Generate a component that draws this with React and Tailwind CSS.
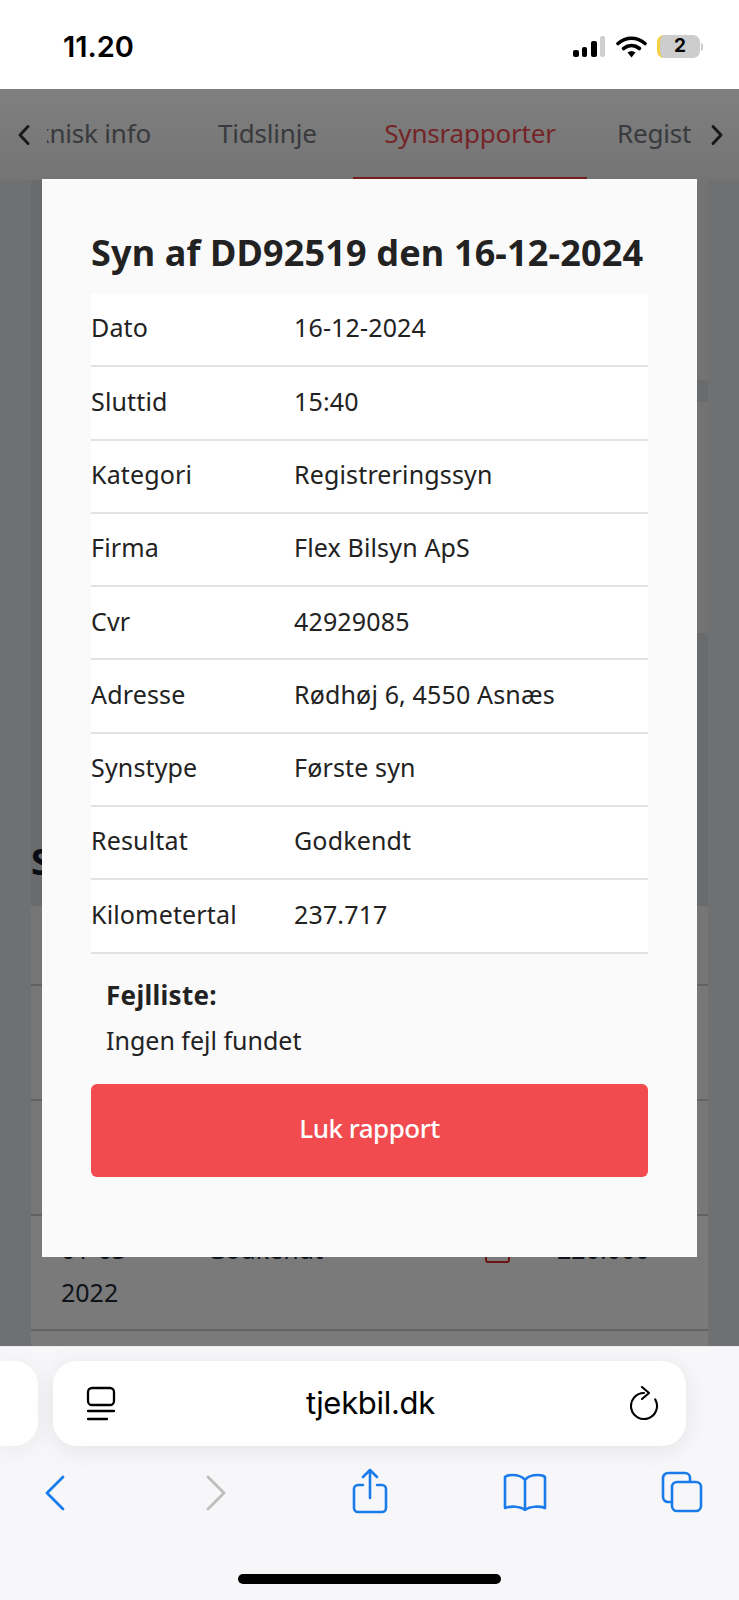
import React from 'react';

const rows = [
  ['Dato', '16-12-2024'],
  ['Sluttid', '15:40'],
  ['Kategori', 'Registreringssyn'],
  ['Firma', 'Flex Bilsyn ApS'],
  ['Cvr', '42929085'],
  ['Adresse', 'Rødhøj 6, 4550 Asnæs'],
  ['Synstype', 'Første syn'],
  ['Resultat', 'Godkendt'],
  ['Kilometertal', '237.717'],
];

const StatusBar = () => (
  <div className="h-[89px] bg-white flex items-start pt-[29px] pl-[63px] font-['Inter',sans-serif]">
    <span className="text-[29px] leading-[36px] font-semibold text-black">11.20</span>
    <div className="ml-auto mr-[36px] mt-[6px] flex items-center">
      <div className="flex items-end gap-[3.5px] h-[21px]">
        <div className="w-[6px] h-[7px] rounded-[2px] bg-black" />
        <div className="w-[5px] h-[10px] rounded-[2px] bg-black" />
        <div className="w-[6px] h-[16px] rounded-[2px] bg-black" />
        <div className="w-[5px] h-[21px] rounded-[2px] bg-[#cfcfcf]" />
      </div>
      <svg className="ml-[11px]" width="31" height="22" viewBox="0 0 31 22">
        <path d="M2 7.500C10 .5 21 .5 29 7.500" fill="none" stroke="#000" strokeWidth="3.600" strokeLinecap="round" />
        <path d="M7.500 12.500C12.500 8.500 18.500 8.500 23.500 12.500" fill="none" stroke="#000" strokeWidth="3.600" strokeLinecap="round" />
        <path d="M11.500 16.500L15.500 21.500L19.500 16.500C17 14.500 14 14.500 11.500 16.500Z" fill="#000" />
      </svg>
      <div className="ml-[10px] w-[43px] h-[23px] rounded-[7px] bg-[#cdcdcd] border-l-[3px] border-[#f4d03f] flex items-center justify-center text-[19px] font-bold text-black">
        2
      </div>
      <div className="ml-[1px] w-[2px] h-[8px] rounded-r-sm bg-[#cdcdcd]" />
    </div>
  </div>
);

const TabBar = () => (
  <div className="h-[91px] bg-gradient-to-b from-white to-[#e9e9e9] flex items-center">
    <svg className="ml-[17px] shrink-0" width="14" height="22" viewBox="0 0 14 22">
      <path d="M11 2.500L3 11l8 8.500" fill="none" stroke="#333" strokeWidth="3" strokeLinecap="round" strokeLinejoin="round" />
    </svg>
    <div className="ml-[16px] w-[645px] h-full overflow-hidden flex items-center text-[26px] text-[#70757b] font-['Noto_Sans',sans-serif] tracking-[-0.2px]">
      <div className="shrink-0 w-[145px] -ml-[41px] pb-[3px] whitespace-nowrap text-right">Teknisk info</div>
      <div className="shrink-0 ml-[67px] w-[99px] pb-[3px] whitespace-nowrap">Tidslinje</div>
      <div className="shrink-0 ml-[36px] w-[234px] h-full flex items-center justify-center text-[#e84a4e] border-b-[3px] border-[#e83a3c] whitespace-nowrap">
        Synsrapporter
      </div>
      <div className="shrink-0 ml-[30px] pb-[3px] whitespace-nowrap">Registreringsdata</div>
    </div>
    <svg className="ml-[18px] shrink-0" width="14" height="22" viewBox="0 0 14 22">
      <path d="M3 2.500L11 11l-8 8.500" fill="none" stroke="#333" strokeWidth="3" strokeLinecap="round" strokeLinejoin="round" />
    </svg>
  </div>
);

const PageBehind = () => (
  <div className="h-full bg-[#dfe0e3]">
    <TabBar />
    <div className="mx-[31px] h-[1166px] bg-[#d5d6d9] pl-[11px] overflow-hidden">
      <div className="h-[200px] bg-[#e6e6e6]" />
      <div className="mt-[22px] h-[231px] bg-[#e6e6e6]" />
    </div>
  </div>
);

const BackgroundTable = () => (
  <div className="absolute left-[31px] right-[31px] top-[758px] font-['Noto_Sans',sans-serif]">
    <h2 className="h-[59px] text-[36px] leading-[29px] font-bold text-[#111827]">Synsrapporter</h2>
    <div className="h-[80px] bg-[#ececec] border-b-2 border-[#c4c4c4]" />
    <div className="h-[115px] bg-[#eeeeee] border-b-2 border-[#c4c4c4]" />
    <div className="h-[115px] bg-[#eeeeee] border-b-2 border-[#c4c4c4]" />
    <div className="h-[115px] bg-[#f4f4f4] border-b-2 border-[#c4c4c4] flex pt-[12px] pl-[30px] text-[25px] leading-[43px] text-[#1f2937]">
      <div className="w-[146px]">01-03-<br />2022</div>
      <div className="w-[278px]">Godkendt</div>
      <div className="w-[72px] pt-[5px]">
        <svg width="25" height="30" viewBox="0 0 25 30">
          <rect x="1" y="1" width="23" height="28" rx="2" fill="none" stroke="#dc2626" strokeWidth="2" />
        </svg>
      </div>
      <div className="w-[96px]">220.000</div>
      <svg className="ml-[14px] mt-[18px]" width="10" height="8" viewBox="0 0 10 8">
        <path d="M1 1l4 5 4-5" fill="none" stroke="#444" strokeWidth="1.500" />
      </svg>
    </div>
    <div className="h-[40px] bg-[#f4f4f4]" />
  </div>
);

const ReportModal = () => (
  <div className="w-[655px] h-[1078px] mt-[90px] bg-[#fafafa] px-[49px] font-['Noto_Sans',sans-serif] text-[#222]">
    <h2 className="h-[115px] pt-[49px] text-[36px] leading-[50px] font-bold whitespace-nowrap tracking-[0.15px]">
      Syn af DD92519 den 16-12-2024
    </h2>
    <div className="bg-white">
      {rows.map((row, index) => (
        <div key={index} className="h-[73.300px] pb-[3px] flex items-center border-b-2 border-[#e2e2e2] text-[25px] tracking-[0.15px]">
          <span className="w-[203px]">{row[0]}</span>
          <span>{row[1]}</span>
        </div>
      ))}
    </div>
    <div className="pl-[15px] pt-[19px]">
      <p className="text-[26px] leading-[45px] font-bold tracking-[0.3px]">Fejlliste:</p>
      <p className="text-[25px] leading-[45px]">Ingen fejl fundet</p>
    </div>
    <button className="mt-[21px] w-full h-[93px] pb-[4px] rounded-[6px] bg-[#f14b4f] text-white text-[26px] font-medium tracking-[-0.5px]">
      Luk rapport
    </button>
  </div>
);

const SafariBar = () => (
  <div className="h-[254px] bg-[#f7f7f9] border-t border-[#ececec] font-['Inter',sans-serif]">
    <div className="flex gap-[15px] pt-[14px]">
      <div className="w-[38px] h-[85px] bg-white rounded-r-[24px] shadow-[0_4px_24px_rgba(0,0,0,0.06)]" />
      <div className="w-[633px] h-[85px] bg-white rounded-[24px] shadow-[0_4px_24px_rgba(0,0,0,0.08)] flex items-center justify-between pl-[33px] pr-[26px]">
        <svg width="30" height="36" viewBox="0 0 30 36" fill="none" stroke="#000" strokeWidth="2.300" strokeLinecap="round">
          <rect x="2" y="2" width="26" height="17" rx="4" />
          <path d="M2 25h26M2 33h19" />
        </svg>
        <span className="mr-[5px] text-[31px] text-black tracking-[-0.3px]">tjekbil.dk</span>
        <svg width="30" height="36" viewBox="0 0 30 36" fill="none" stroke="#000" strokeWidth="2.100" strokeLinecap="round" strokeLinejoin="round">
          <path d="M14 7a13 13 0 1 0 11.200 6.400" />
          <path d="M12 1l7 6-7 6" />
        </svg>
      </div>
    </div>
    <div className="flex items-start pt-[29px] pl-[45px]">
      <svg width="20" height="36" viewBox="0 0 20 36" fill="none" stroke="#1a7bea" strokeWidth="2.800" strokeLinecap="round" strokeLinejoin="round">
        <path d="M18 2L2 18l16 16" />
      </svg>
      <svg className="ml-[141px]" width="20" height="36" viewBox="0 0 20 36" fill="none" stroke="#bdbdbd" strokeWidth="2.800" strokeLinecap="round" strokeLinejoin="round">
        <path d="M2 2l16 16L2 34" />
      </svg>
      <svg className="ml-[126px] -mt-[7px]" width="36" height="46" viewBox="0 0 36 46" fill="none" stroke="#1a7bea" strokeWidth="2.600" strokeLinecap="round" strokeLinejoin="round">
        <path d="M11 17H6a4 4 0 0 0-4 4v19a4 4 0 0 0 4 4h24a4 4 0 0 0 4-4V21a4 4 0 0 0-4-4h-5" />
        <path d="M18 30V2M11 9l7-7 7 7" />
      </svg>
      <svg className="ml-[114px] -mt-[2px]" width="46" height="38" viewBox="0 0 46 38" fill="none" stroke="#1a7bea" strokeWidth="2.600" strokeLinecap="round" strokeLinejoin="round">
        <path d="M23 7C20 3 15 2 10 2 7 2 4 3 3 4v31c5-2 15-2 20 2 5-4 15-4 20-2V4c-1-1-4-2-7-2-5 0-10 1-13 5zM23 7v30" />
      </svg>
      <svg className="ml-[113px] -mt-[4px]" width="42" height="42" viewBox="0 0 42 42" fill="none" stroke="#1a7bea" strokeWidth="2.600" strokeLinejoin="round">
        <path d="M10 31H7a5 5 0 0 1-5-5V7a5 5 0 0 1 5-5h17a5 5 0 0 1 5 5v3" />
        <rect x="11" y="11" width="29" height="29" rx="5" />
      </svg>
    </div>
    <div className="mt-[60px] mx-auto w-[263px] h-[10px] rounded-full bg-black" />
  </div>
);

const App = () => (
  <div className="w-[739px] h-[1600px] flex flex-col overflow-hidden bg-white">
    <StatusBar />
    <div className="relative flex-1 overflow-hidden">
      <PageBehind />
      <BackgroundTable />
      {/* dimmed overlay with the report on top */}
      <div className="absolute inset-0 bg-black/50 flex justify-center">
        <ReportModal />
      </div>
    </div>
    <SafariBar />
  </div>
);

export default App;
